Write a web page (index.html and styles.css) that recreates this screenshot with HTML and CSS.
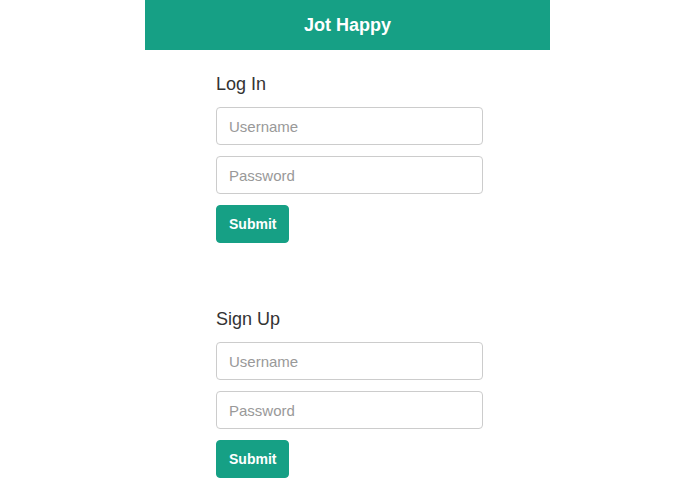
FILE: index.html
```html
<!DOCTYPE html>
<html>
<head>
    <link rel="stylesheet" href="styles.css">
</head>
<body>
    <div class="page">
        <header class="topbar">Jot Happy</header>

        <div class="forms">
            <form class="auth-form">
                <h3>Log In</h3>
                <input type="text" class="field" placeholder="Username">
                <input type="password" class="field" placeholder="Password">
                <button type="button" class="btn">Submit</button>
            </form>

            <form class="auth-form">
                <h3>Sign Up</h3>
                <input type="text" class="field" placeholder="Username">
                <input type="password" class="field" placeholder="Password">
                <button type="button" class="btn">Submit</button>
            </form>
        </div>
    </div>
</body>
</html>
```

FILE: styles.css
```css
body {
    font-family: "Liberation Sans", Arial, sans-serif;
    color: #333;
    margin: 0;
    background: #fff;
    overflow: hidden;
}

.page {
    width: 405px;
    margin: 0 auto;
}

.topbar {
    height: 50px;
    background: #16a085;
    color: #fff;
    font-size: 18px;
    font-weight: bold;
    display: flex;
    align-items: center;
    justify-content: center;
}

.forms {
    padding-left: 71px;
    padding-top: 24px;
}

.auth-form {
    width: 267px;
    display: flex;
    flex-direction: column;
    align-items: flex-start;
    gap: 11px;
    margin-bottom: 66px;
}

.auth-form:last-child {
    margin-bottom: 0;
}

.auth-form h3 {
    font-size: 18px;
    font-weight: normal;
    line-height: 20px;
    margin: 0 0 2px;
    color: #333;
}

.field {
    box-sizing: border-box;
    width: 100%;
    height: 38px;
    padding: 0 12px;
    border: 1px solid #ccc;
    border-radius: 4px;
    font-family: inherit;
    font-size: 15px;
    color: #555;
}

.field::placeholder {
    color: #999;
}

.btn {
    height: 38px;
    padding: 0 12px;
    background: #16a085;
    border: 1px solid #16a085;
    border-radius: 4px;
    color: #fff;
    font-family: inherit;
    font-size: 14px;
    font-weight: bold;
}
```
